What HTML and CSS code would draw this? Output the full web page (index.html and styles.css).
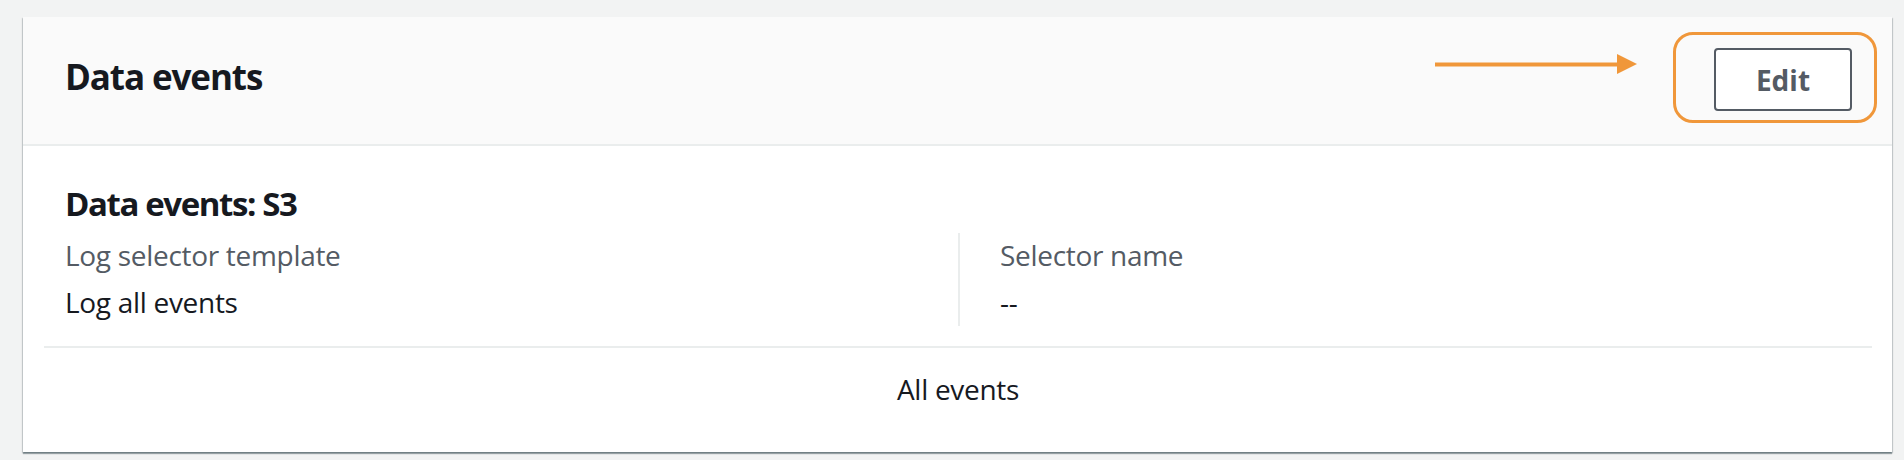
FILE: index.html
```html
<!DOCTYPE html>
<html lang="en">
<head>
<meta charset="utf-8">
<title>Data events</title>
<link rel="stylesheet" href="styles.css">
</head>
<body>
<div class="card">
  <div class="card-header">
    <h2 class="title">Data events</h2>
    <button class="btn">Edit</button>
    <svg class="arrow" width="204" height="20" viewBox="0 0 204 20" aria-hidden="true">
      <line x1="0" y1="10.5" x2="186" y2="10.5" stroke="#f0973a" stroke-width="4"/>
      <polygon points="182,0 202,10 182,20" fill="#f0973a"/>
    </svg>
    <div class="highlight"></div>
  </div>
  <div class="card-body">
    <div class="section">
      <h3 class="subtitle">Data events: S3</h3>
      <div class="cols">
        <div class="col">
          <div class="label">Log selector template</div>
          <div class="value">Log all events</div>
        </div>
        <div class="col col-right">
          <div class="label">Selector name</div>
          <div class="value">--</div>
        </div>
      </div>
    </div>
    <div class="footer">All events</div>
  </div>
</div>
</body>
</html>
```
FILE: styles.css
```css
* { box-sizing: border-box; }
html, body { margin: 0; padding: 0; }
body {
  background: #f2f3f3;
  font-family: "Open Sans", "Noto Sans", Arial, sans-serif;
  color: #16191f;
  width: 1904px;
  height: 460px;
  overflow: hidden;
}
.card {
  margin: 17px 0 0 23px;
  width: 1869px;
  height: 435px;
  background: #fff;
  box-shadow: 0 2px 1px 0 rgba(0, 28, 36, 0.35), 1px 1px 1px 0 rgba(0, 28, 36, 0.15), -1px 1px 1px 0 rgba(0, 28, 36, 0.15);
}
.card-header {
  position: relative;
  display: flex;
  justify-content: space-between;
  align-items: flex-start;
  height: 129px;
  padding: 0 40px 0 42px;
  background: #fafafa;
  border-bottom: 2px solid #eaeded;
}
.title {
  margin: 36px 0 0 0;
  font-size: 35px;
  line-height: 48px;
  letter-spacing: -1.1px;
  font-weight: 700;
  color: #16191f;
}
.btn {
  margin-top: 31px;
  width: 138px;
  height: 63px;
  border: 2px solid #545b64;
  border-radius: 4px;
  background: #fff;
  color: #545b64;
  font-family: inherit;
  font-size: 28px;
  font-weight: 700;
  padding: 0;
}
.arrow {
  position: absolute;
  left: 1412px;
  top: 37px;
}
.highlight {
  position: absolute;
  left: 1650px;
  top: 15px;
  width: 204px;
  height: 91px;
  border: 3px solid #f0973a;
  border-radius: 20px;
}
.card-body {
  padding: 0 20px 0 21px;
}
.section {
  padding: 34px 21px 0 21px;
  border-bottom: 2px solid #eaeded;
}
.subtitle {
  margin: 0;
  font-size: 33px;
  line-height: 48px;
  letter-spacing: -1.4px;
  font-weight: 700;
  color: #16191f;
}
.cols {
  display: grid;
  grid-template-columns: 1fr 1fr;
  margin-top: 5px;
  padding-bottom: 20px;
}
.col {
  padding: 2px 0 4px 0;
}
.col-right {
  border-left: 2px solid #eaeded;
  padding-left: 40px;
}
.label {
  font-size: 28px;
  line-height: 40px;
  letter-spacing: -0.3px;
  color: #545b64;
}
.value {
  margin-top: 7px;
  font-size: 28px;
  line-height: 40px;
  letter-spacing: -0.3px;
  color: #16191f;
}
.footer {
  padding-top: 21px;
  text-align: center;
  font-size: 28px;
  line-height: 40px;
  letter-spacing: -0.3px;
  color: #16191f;
}
```
